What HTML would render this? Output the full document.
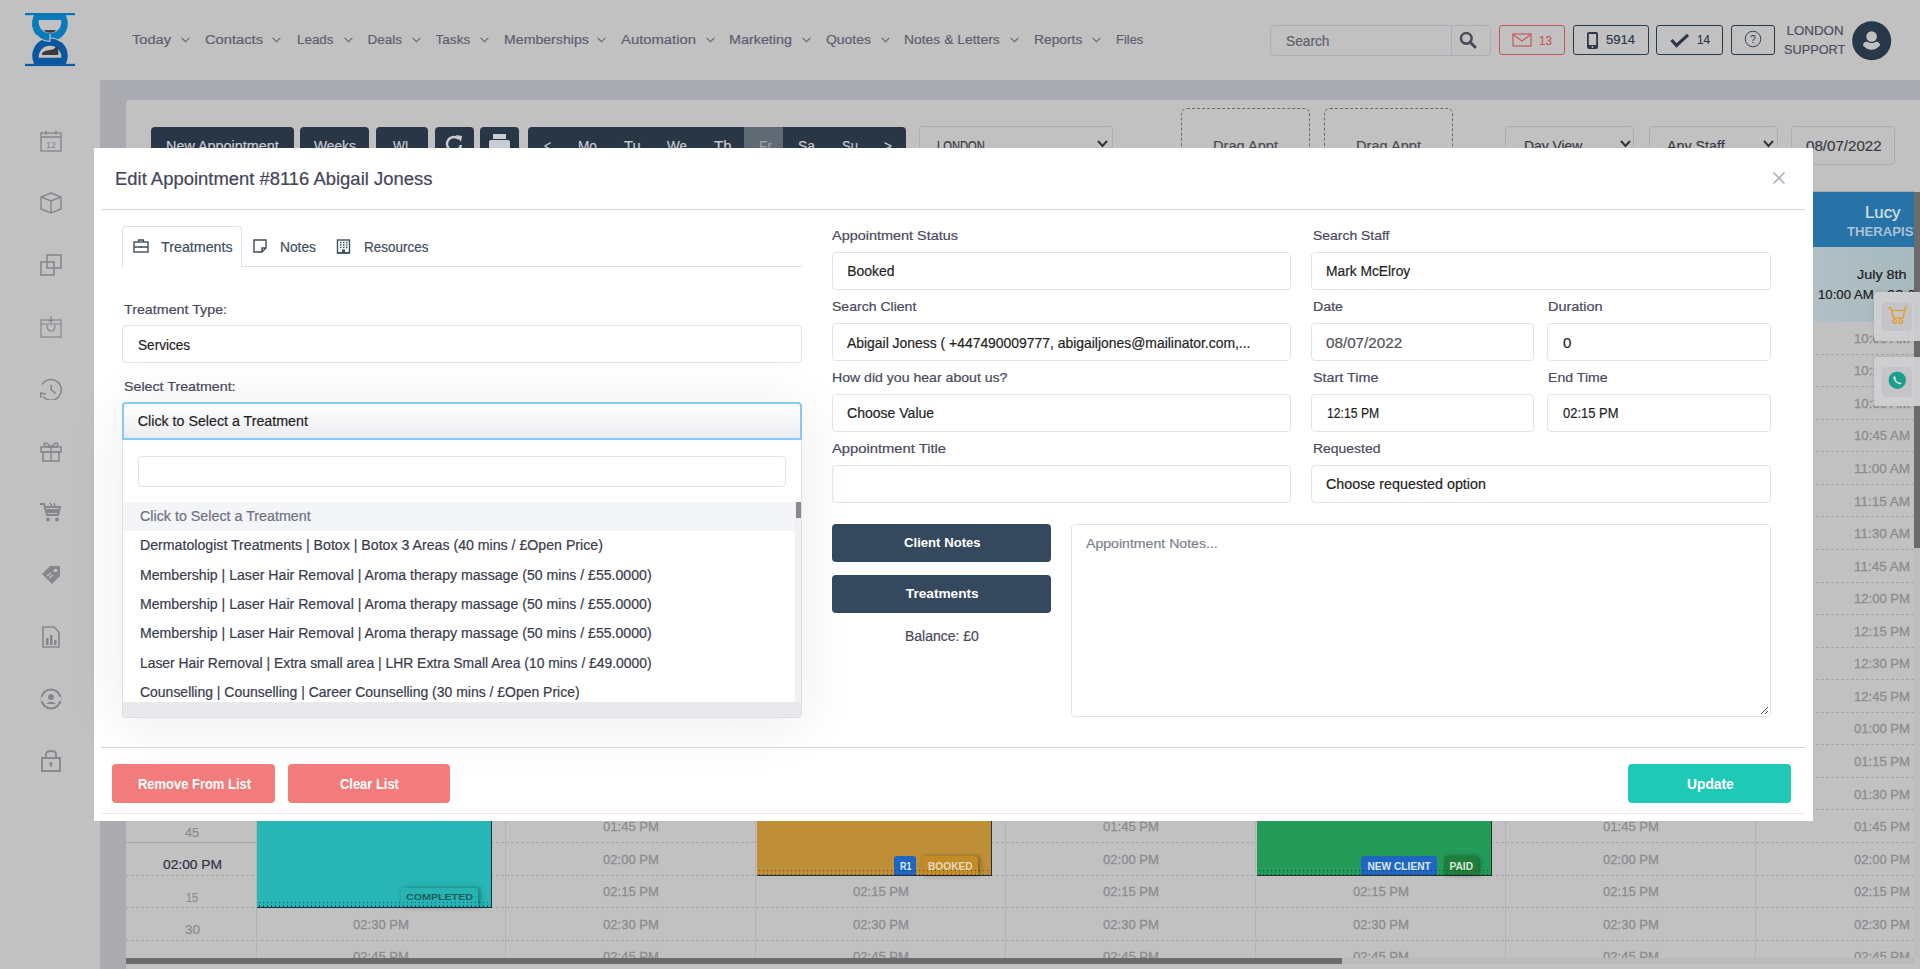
<!DOCTYPE html><html><head><meta charset="utf-8"><title>Edit Appointment</title><style>
html,body{margin:0;padding:0;}
body{width:1920px;height:969px;overflow:hidden;position:relative;background:#c1c1c1;font-family:"Liberation Sans",sans-serif;}
.t{position:absolute;white-space:nowrap;transform-origin:0 0;-webkit-text-stroke:0.2px currentColor;}
.r{position:absolute;box-sizing:border-box;}
</style></head><body>

<div class="r" style="left:100px;top:80px;width:1820px;height:889px;background:#aaabb1;"></div>
<div class="r" style="left:126px;top:100px;width:1794px;height:869px;background:#c1c1c1;border-radius:4px 0 0 0;"></div>
<svg class="r" style="left:0px;top:0px;" width="100" height="80" viewBox="0 0 100 80">
      <defs>
        <clipPath id="lc"><rect x="20" y="14" width="60" height="50"/></clipPath>
        <clipPath id="lhalf"><rect x="20" y="14" width="30" height="50"/></clipPath>
        <clipPath id="lrov"><rect x="50.5" y="30" width="30" height="12"/></clipPath>
        <clipPath id="llov"><rect x="20" y="35" width="29.5" height="12"/></clipPath>
        <clipPath id="th"><rect x="20" y="20" width="60" height="20"/></clipPath>
        <clipPath id="bh"><rect x="20" y="40" width="60" height="17.8"/></clipPath>
      </defs>
      <g clip-path="url(#lc)">
        <circle cx="50" cy="23.5" r="17.8" fill="#0a7bba"/>
        <circle cx="50" cy="55.8" r="17.8" fill="#0a56a1"/>
        <circle cx="50" cy="23.5" r="17.8" fill="#0a7bba" clip-path="url(#lhalf)"/>
        <circle cx="50" cy="23.5" r="17.8" fill="none" stroke="#c1c1c1" stroke-width="1.2" clip-path="url(#llov)"/>
        <circle cx="50" cy="55.8" r="17.8" fill="none" stroke="#c1c1c1" stroke-width="1.2" clip-path="url(#lrov)"/>
        <path d="M50 34 L50 42" stroke="#c1c1c1" stroke-width="1.2"/>
        <circle cx="50" cy="22" r="11.3" fill="#c1c1c1" clip-path="url(#th)"/>
        <circle cx="50" cy="57" r="11.3" fill="#c1c1c1" clip-path="url(#bh)"/>
      </g>
      <rect x="25" y="13" width="50" height="2.2" fill="#0a74b4"/>
      <rect x="25" y="63.8" width="50" height="2.3" fill="#0a5aa6"/>
      <path d="M43.5 30.3 Q50 29.5 56.5 30.3 Q54 32.8 50 32.8 Q46 32.8 43.5 30.3 Z" fill="#3b3b3b"/>
      <path d="M42 55 L58.3 55 L58.3 50 Q58 46.5 56 46.5 Q55 49.5 50 50 Q44 50.5 42 53 Z" fill="#3b3b3b"/>
    </svg>
<div class="t" style="left:132.00px;top:33.26px;font-size:13.52px;line-height:13.52px;color:#5f5d73;transform:scaleX(1.0806);">Today</div>
<svg class="r" style="left:181px;top:37px;" width="9" height="6" viewBox="0 0 9 6"><path d="M0.7 0.8 L4.5 4.8 L8.3 0.8" fill="none" stroke="#5f5d73" stroke-width="1.1"/></svg>
<div class="t" style="left:205.00px;top:33.26px;font-size:13.52px;line-height:13.52px;color:#5f5d73;transform:scaleX(1.0876);">Contacts</div>
<svg class="r" style="left:272px;top:37px;" width="9" height="6" viewBox="0 0 9 6"><path d="M0.7 0.8 L4.5 4.8 L8.3 0.8" fill="none" stroke="#5f5d73" stroke-width="1.1"/></svg>
<div class="t" style="left:297.00px;top:33.26px;font-size:13.52px;line-height:13.52px;color:#5f5d73;transform:scaleX(0.9909);">Leads</div>
<svg class="r" style="left:344px;top:37px;" width="9" height="6" viewBox="0 0 9 6"><path d="M0.7 0.8 L4.5 4.8 L8.3 0.8" fill="none" stroke="#5f5d73" stroke-width="1.1"/></svg>
<div class="t" style="left:367.50px;top:33.26px;font-size:13.52px;line-height:13.52px;color:#5f5d73;">Deals</div>
<svg class="r" style="left:411.7px;top:37px;" width="9" height="6" viewBox="0 0 9 6"><path d="M0.7 0.8 L4.5 4.8 L8.3 0.8" fill="none" stroke="#5f5d73" stroke-width="1.1"/></svg>
<div class="t" style="left:435.60px;top:33.26px;font-size:13.52px;line-height:13.52px;color:#5f5d73;">Tasks</div>
<svg class="r" style="left:479.5px;top:37px;" width="9" height="6" viewBox="0 0 9 6"><path d="M0.7 0.8 L4.5 4.8 L8.3 0.8" fill="none" stroke="#5f5d73" stroke-width="1.1"/></svg>
<div class="t" style="left:503.50px;top:33.26px;font-size:13.52px;line-height:13.52px;color:#5f5d73;transform:scaleX(1.0456);">Memberships</div>
<svg class="r" style="left:597px;top:37px;" width="9" height="6" viewBox="0 0 9 6"><path d="M0.7 0.8 L4.5 4.8 L8.3 0.8" fill="none" stroke="#5f5d73" stroke-width="1.1"/></svg>
<div class="t" style="left:621.00px;top:33.26px;font-size:13.52px;line-height:13.52px;color:#5f5d73;transform:scaleX(1.0965);">Automation</div>
<svg class="r" style="left:706px;top:37px;" width="9" height="6" viewBox="0 0 9 6"><path d="M0.7 0.8 L4.5 4.8 L8.3 0.8" fill="none" stroke="#5f5d73" stroke-width="1.1"/></svg>
<div class="t" style="left:729.30px;top:33.26px;font-size:13.52px;line-height:13.52px;color:#5f5d73;transform:scaleX(1.0617);">Marketing</div>
<svg class="r" style="left:802px;top:37px;" width="9" height="6" viewBox="0 0 9 6"><path d="M0.7 0.8 L4.5 4.8 L8.3 0.8" fill="none" stroke="#5f5d73" stroke-width="1.1"/></svg>
<div class="t" style="left:825.70px;top:33.26px;font-size:13.52px;line-height:13.52px;color:#5f5d73;transform:scaleX(1.0323);">Quotes</div>
<svg class="r" style="left:881px;top:37px;" width="9" height="6" viewBox="0 0 9 6"><path d="M0.7 0.8 L4.5 4.8 L8.3 0.8" fill="none" stroke="#5f5d73" stroke-width="1.1"/></svg>
<div class="t" style="left:904.30px;top:33.26px;font-size:13.52px;line-height:13.52px;color:#5f5d73;transform:scaleX(1.0275);">Notes &amp; Letters</div>
<svg class="r" style="left:1010px;top:37px;" width="9" height="6" viewBox="0 0 9 6"><path d="M0.7 0.8 L4.5 4.8 L8.3 0.8" fill="none" stroke="#5f5d73" stroke-width="1.1"/></svg>
<div class="t" style="left:1034.00px;top:33.26px;font-size:13.52px;line-height:13.52px;color:#5f5d73;transform:scaleX(1.0209);">Reports</div>
<svg class="r" style="left:1092px;top:37px;" width="9" height="6" viewBox="0 0 9 6"><path d="M0.7 0.8 L4.5 4.8 L8.3 0.8" fill="none" stroke="#5f5d73" stroke-width="1.1"/></svg>
<div class="t" style="left:1116.00px;top:33.26px;font-size:13.52px;line-height:13.52px;color:#5f5d73;transform:scaleX(0.9572);">Files</div>
<div class="r" style="left:1270px;top:24.5px;width:221px;height:31px;border:1px solid #aeaeba;border-radius:4px;"></div>
<div class="r" style="left:1451px;top:25px;width:1px;height:30px;background:#aeaeba;"></div>
<div class="t" style="left:1285.50px;top:34.27px;font-size:14.10px;line-height:14.10px;color:#5e5e6c;transform:scaleX(0.9733);">Search</div>
<svg class="r" style="left:1459px;top:31px;" width="18" height="18" viewBox="0 0 18 18"><circle cx="7.3" cy="7.3" r="5.3" fill="none" stroke="#4a4a5a" stroke-width="2.6"/><path d="M11 11 L16 16" stroke="#4a4a5a" stroke-width="3" stroke-linecap="round"/></svg>
<div class="r" style="left:1499px;top:25px;width:66px;height:30px;border:1px solid #c9575a;border-radius:3px;"></div>
<svg class="r" style="left:1512px;top:33px;" width="20" height="14" viewBox="0 0 20 14"><rect x="1" y="1" width="18" height="12" fill="none" stroke="#c9575a" stroke-width="1.2"/><path d="M1 1.5 L10 8 L19 1.5" fill="none" stroke="#c9575a" stroke-width="1.2"/></svg>
<div class="t" style="left:1538.70px;top:33.56px;font-size:13.52px;line-height:13.52px;color:#c9575a;transform:scaleX(0.8664);">13</div>
<div class="r" style="left:1573px;top:25.3px;width:76px;height:29.5px;border:1.3px solid #2b3848;border-radius:3px;"></div>
<svg class="r" style="left:1586px;top:31px;" width="13" height="19" viewBox="0 0 13 19"><rect x="1" y="1" width="11" height="17" rx="2" fill="#2b3848"/><rect x="2.8" y="3" width="7.4" height="11" fill="#c1c1c1"/><circle cx="6.5" cy="16" r="0.9" fill="#c1c1c1"/></svg>
<div class="t" style="left:1606.00px;top:33.43px;font-size:13.66px;line-height:13.66px;color:#2b3848;transform:scaleX(0.9540);">5914</div>
<div class="r" style="left:1656.4px;top:25.3px;width:66.5px;height:29.5px;border:1.3px solid #2b3848;border-radius:3px;"></div>
<svg class="r" style="left:1670px;top:33px;" width="20" height="15" viewBox="0 0 20 15"><path d="M1.5 7 L6.5 12.5 L18 1.8" fill="none" stroke="#2b3848" stroke-width="3.2"/></svg>
<div class="t" style="left:1696.50px;top:33.43px;font-size:13.66px;line-height:13.66px;color:#2b3848;transform:scaleX(0.8638);">14</div>
<div class="r" style="left:1731px;top:25.3px;width:44px;height:29.5px;border:1.3px solid #2b3848;border-radius:3px;"></div>
<svg class="r" style="left:1744px;top:30px;" width="18" height="18" viewBox="0 0 18 18"><circle cx="9" cy="9" r="7.8" fill="none" stroke="#2b3848" stroke-width="0.9"/><text x="9" y="12.6" font-size="10" text-anchor="middle" fill="#2b3848" font-family="Liberation Sans">?</text></svg>
<div class="t" style="left:1786.50px;top:24.28px;font-size:13.37px;line-height:13.37px;color:#4f4d60;">LONDON</div>
<div class="t" style="left:1783.70px;top:43.28px;font-size:13.37px;line-height:13.37px;color:#4f4d60;transform:scaleX(0.9521);">SUPPORT</div>
<svg class="r" style="left:1852px;top:20.5px;" width="40" height="40" viewBox="0 0 40 40"><circle cx="19.7" cy="19.8" r="19.5" fill="#283848"/><path d="M11 24.5 Q11 20.5 16 20.2 L23 20.2 Q28 20.5 28 24.5 Q24 28.7 19.5 28.7 Q15 28.7 11 24.5Z" fill="#c1c1c1"/><circle cx="19.6" cy="15.5" r="6.6" fill="#283848"/><circle cx="19.6" cy="15.5" r="5.3" fill="#c1c1c1"/></svg>
<svg class="r" style="left:40px;top:130px;" width="22" height="22" viewBox="0 0 22 22"><rect x="1" y="3" width="20" height="18" fill="none" stroke="#86868e" stroke-width="1.4"/><path d="M1 7 L21 7 M6 0.5 L6 5 M16 0.5 L16 5" stroke="#86868e" stroke-width="1.4"/><text x="11" y="17.5" font-size="9" text-anchor="middle" fill="#86868e" font-family="Liberation Sans">12</text></svg>
<svg class="r" style="left:40px;top:192px;" width="22" height="22" viewBox="0 0 22 22"><path d="M11 1 L21 5 L21 17 L11 21 L1 17 L1 5 Z M1 5 L11 9 L21 5 M11 9 L11 21" fill="none" stroke="#86868e" stroke-width="1.4"/></svg>
<svg class="r" style="left:40px;top:254px;" width="22" height="22" viewBox="0 0 22 22"><rect x="1" y="8" width="13" height="13" fill="none" stroke="#86868e" stroke-width="1.6"/><rect x="7" y="1" width="14" height="13" fill="none" stroke="#86868e" stroke-width="1.6"/></svg>
<svg class="r" style="left:40px;top:316px;" width="22" height="22" viewBox="0 0 22 22"><rect x="1" y="4" width="20" height="17" fill="none" stroke="#86868e" stroke-width="1.2"/><path d="M1 8 L21 8 M7 9 Q7 15 11 15 Q15 15 15 9 M11 0 L11 6 M9 4 L11 6 L13 4" fill="none" stroke="#86868e" stroke-width="1.2"/></svg>
<svg class="r" style="left:40px;top:378px;" width="22" height="22" viewBox="0 0 22 22"><path d="M2.2 6.5 A10.3 10.3 0 1 1 3.2 18.6" fill="none" stroke="#86868e" stroke-width="1.5"/><path d="M5.8 16 L0.8 15 L1 19.8" fill="none" stroke="#86868e" stroke-width="1.6"/><path d="M11.1 6.7 L11.1 11.4 L15.4 15.6" fill="none" stroke="#86868e" stroke-width="1.5"/></svg>
<svg class="r" style="left:40px;top:440px;" width="22" height="22" viewBox="0 0 22 22"><rect x="1" y="7" width="20" height="5" fill="none" stroke="#86868e" stroke-width="1.6"/><rect x="3" y="12" width="16" height="9" fill="none" stroke="#86868e" stroke-width="1.6"/><path d="M11 7 L11 21 M11 7 Q6 1 4 4 Q4 7 11 7 Q16 1 18 4 Q18 7 11 7" fill="none" stroke="#86868e" stroke-width="1.4"/></svg>
<svg class="r" style="left:40px;top:502px;" width="22" height="22" viewBox="0 0 22 22"><path d="M0 2 L4 2 L7 13 L18 13 L20 5 L5 5" fill="none" stroke="#86868e" stroke-width="2"/><path d="M6 7 L19 7 L18 11 L7 11Z" fill="#86868e"/><circle cx="8" cy="17.5" r="2" fill="#86868e"/><circle cx="17" cy="17.5" r="2" fill="#86868e"/><path d="M10 1 L12 4 M14 1 L15 4" stroke="#86868e" stroke-width="1.4"/></svg>
<svg class="r" style="left:40px;top:564px;" width="22" height="22" viewBox="0 0 22 22"><path d="M2 10 L10 2 L20 2 L20 12 L12 20 Z" fill="#86868e"/><circle cx="15.5" cy="6.5" r="1.8" fill="#c1c1c1"/><path d="M7 12 L11 9 M9 14 L13 11" stroke="#c1c1c1" stroke-width="1.4"/></svg>
<svg class="r" style="left:40px;top:626px;" width="22" height="22" viewBox="0 0 22 22"><path d="M3 1 L14 1 L19 6 L19 21 L3 21 Z" fill="none" stroke="#86868e" stroke-width="1.6"/><rect x="6" y="12" width="2.5" height="7" fill="#86868e"/><rect x="10" y="9" width="2.5" height="10" fill="#86868e"/><rect x="14" y="14" width="2.5" height="5" fill="#86868e"/></svg>
<svg class="r" style="left:40px;top:688px;" width="22" height="22" viewBox="0 0 22 22"><circle cx="11" cy="11" r="9.5" fill="none" stroke="#86868e" stroke-width="2"/><circle cx="11" cy="9" r="3" fill="#86868e"/><path d="M6 16 Q11 11 16 16 Z" fill="#86868e"/><rect x="1" y="9" width="3" height="4" fill="#c1c1c1"/><rect x="18" y="9" width="3" height="4" fill="#c1c1c1"/></svg>
<svg class="r" style="left:40px;top:750px;" width="22" height="22" viewBox="0 0 22 22"><rect x="2" y="8" width="18" height="13" fill="none" stroke="#86868e" stroke-width="1.8"/><path d="M6 8 L6 4 Q6 1 11 1 Q16 1 16 4 L16 8" fill="none" stroke="#86868e" stroke-width="1.8"/><circle cx="11" cy="13.5" r="1.6" fill="#86868e"/><path d="M11 14 L11 17" stroke="#86868e" stroke-width="1.6"/></svg>
<div class="r" style="left:151px;top:126.7px;width:143px;height:40px;background:#283646;border-radius:4px;"></div>
<div class="r" style="left:300px;top:126.7px;width:69px;height:40px;background:#283646;border-radius:4px;"></div>
<div class="r" style="left:376px;top:126.7px;width:52px;height:40px;background:#283646;border-radius:4px;"></div>
<div class="r" style="left:435px;top:126.7px;width:39px;height:40px;background:#283646;border-radius:4px;"></div>
<div class="r" style="left:480px;top:126.7px;width:39px;height:40px;background:#283646;border-radius:4px;"></div>
<div class="r" style="left:528px;top:126.7px;width:377.5px;height:40px;background:#283646;border-radius:4px;"></div>
<div class="r" style="left:744px;top:126.7px;width:39px;height:40px;background:#5f6a75;"></div>
<div class="t" style="left:166.00px;top:139.40px;font-size:14.53px;line-height:14.53px;color:#c9ccd2;transform:scaleX(0.9916);">New Appointment</div>
<div class="t" style="left:314.00px;top:139.40px;font-size:14.53px;line-height:14.53px;color:#c9ccd2;transform:scaleX(0.9505);">Weeks</div>
<div class="t" style="left:393.00px;top:139.40px;font-size:14.53px;line-height:14.53px;color:#c9ccd2;transform:scaleX(0.8715);">WL</div>
<svg class="r" style="left:444px;top:134px;" width="20" height="16" viewBox="0 0 20 16"><path d="M15 5 A7 7 0 1 0 17 11" fill="none" stroke="#c9ccd2" stroke-width="2.4"/><path d="M12 1 L18 2 L17 8 Z" fill="#c9ccd2"/></svg>
<svg class="r" style="left:489px;top:134px;" width="21" height="16" viewBox="0 0 21 16"><rect x="4" y="0" width="13" height="5" fill="#c9ccd2"/><rect x="0" y="6" width="21" height="10" rx="2" fill="#c9ccd2"/></svg>
<div class="t" style="left:544.00px;top:139.40px;font-size:14.53px;line-height:14.53px;color:#c9ccd2;transform:scaleX(0.8232);">&lt;</div>
<div class="t" style="left:578.00px;top:139.40px;font-size:14.53px;line-height:14.53px;color:#c9ccd2;transform:scaleX(0.9404);">Mo</div>
<div class="t" style="left:624.00px;top:139.40px;font-size:14.53px;line-height:14.53px;color:#c9ccd2;transform:scaleX(1.0107);">Tu</div>
<div class="t" style="left:667.00px;top:139.40px;font-size:14.53px;line-height:14.53px;color:#c9ccd2;transform:scaleX(0.9297);">We</div>
<div class="t" style="left:714.00px;top:139.40px;font-size:14.53px;line-height:14.53px;color:#c9ccd2;transform:scaleX(1.0453);">Th</div>
<div class="t" style="left:759.00px;top:139.40px;font-size:14.53px;line-height:14.53px;color:#9aa1a8;transform:scaleX(0.9465);">Fr</div>
<div class="t" style="left:798.00px;top:139.40px;font-size:14.53px;line-height:14.53px;color:#c9ccd2;transform:scaleX(0.9548);">Sa</div>
<div class="t" style="left:841.60px;top:139.40px;font-size:14.53px;line-height:14.53px;color:#c9ccd2;transform:scaleX(0.8986);">Su</div>
<div class="t" style="left:884.00px;top:139.40px;font-size:14.53px;line-height:14.53px;color:#c9ccd2;transform:scaleX(0.9409);">&gt;</div>
<div class="r" style="left:919px;top:126px;width:194px;height:40px;border:1px solid #adadb3;border-radius:4px;"></div>
<div class="t" style="left:937.00px;top:139.40px;font-size:14.53px;line-height:14.53px;color:#3a3a44;transform:scaleX(0.7716);">LONDON</div>
<svg class="r" style="left:1097px;top:140px;" width="11" height="8" viewBox="0 0 11 8"><path d="M1 1 L5.5 6 L10 1" fill="none" stroke="#333" stroke-width="2"/></svg>
<div class="r" style="left:1180.5px;top:107.5px;width:129px;height:70px;border:1px dashed #6a6a70;border-radius:6px;"></div>
<div class="t" style="left:1212.50px;top:139.40px;font-size:14.53px;line-height:14.53px;color:#4a4a54;transform:scaleX(1.0061);">Drag Appt</div>
<div class="r" style="left:1323.5px;top:107.5px;width:129px;height:70px;border:1px dashed #6a6a70;border-radius:6px;"></div>
<div class="t" style="left:1355.50px;top:139.40px;font-size:14.53px;line-height:14.53px;color:#4a4a54;transform:scaleX(1.0061);">Drag Appt</div>
<div class="r" style="left:1505px;top:126px;width:129px;height:40px;border:1px solid #adadb3;border-radius:4px;"></div>
<div class="t" style="left:1523.50px;top:139.40px;font-size:14.53px;line-height:14.53px;color:#3a3a44;transform:scaleX(0.9560);">Day View</div>
<svg class="r" style="left:1620px;top:140px;" width="11" height="8" viewBox="0 0 11 8"><path d="M1 1 L5.5 6 L10 1" fill="none" stroke="#333" stroke-width="2"/></svg>
<div class="r" style="left:1648.5px;top:126px;width:129px;height:40px;border:1px solid #adadb3;border-radius:4px;"></div>
<div class="t" style="left:1667.00px;top:139.40px;font-size:14.53px;line-height:14.53px;color:#3a3a44;transform:scaleX(0.9826);">Any Staff</div>
<svg class="r" style="left:1763px;top:140px;" width="11" height="8" viewBox="0 0 11 8"><path d="M1 1 L5.5 6 L10 1" fill="none" stroke="#333" stroke-width="2"/></svg>
<div class="r" style="left:1791px;top:126px;width:104px;height:39px;border:1px solid #adadb3;border-radius:4px;"></div>
<div class="t" style="left:1806.00px;top:139.40px;font-size:14.53px;line-height:14.53px;color:#3a3a44;transform:scaleX(1.0406);">08/07/2022</div>
<div class="r" style="left:126px;top:191px;width:1788px;height:1px;background:#a9a9b0;"></div>
<div class="r" style="left:1813px;top:192.4px;width:101px;height:55px;background:#2772a6;"></div>
<div class="t" style="left:1864.50px;top:204.42px;font-size:16.28px;line-height:16.28px;color:#d8e2ea;transform:scaleX(1.0335);">Lucy</div>
<div class="t" style="left:1846.50px;top:225.13px;font-size:13.08px;line-height:13.08px;color:#a9c3d6;font-weight:700;-webkit-text-stroke:0;transform:scaleX(1.0053);">THERAPIST</div>
<div class="r" style="left:1813px;top:247px;width:101px;height:74.5px;background:linear-gradient(90deg,#b0c0c5,#a8babe);"></div>
<div class="t" style="left:1856.80px;top:268.57px;font-size:12.79px;line-height:12.79px;color:#1e2024;transform:scaleX(1.1256);">July 8th</div>
<div class="t" style="left:1817.60px;top:287.88px;font-size:13.37px;line-height:13.37px;color:#1e2024;transform:scaleX(0.9859);">10:00 AM</div>
<div class="t" style="left:1878.00px;top:287.88px;font-size:13.37px;line-height:13.37px;color:#1e2024;transform:scaleX(1.1011);">- 02:00 PM</div>
<div class="r" style="left:126px;top:354px;width:1788px;height:1px;background-image:linear-gradient(90deg,#a6a6aa 60%,transparent 60%);background-size:5px 1px;"></div>
<div class="t" style="left:353.00px;top:331.83px;font-size:13.08px;line-height:13.08px;color:#8c8c90;transform:scaleX(1.0132);-webkit-text-stroke:0.3px #8c8c90;">10:00 AM</div>
<div class="t" style="left:603.00px;top:331.83px;font-size:13.08px;line-height:13.08px;color:#8c8c90;transform:scaleX(1.0132);-webkit-text-stroke:0.3px #8c8c90;">10:00 AM</div>
<div class="t" style="left:853.00px;top:331.83px;font-size:13.08px;line-height:13.08px;color:#8c8c90;transform:scaleX(1.0132);-webkit-text-stroke:0.3px #8c8c90;">10:00 AM</div>
<div class="t" style="left:1103.00px;top:331.83px;font-size:13.08px;line-height:13.08px;color:#8c8c90;transform:scaleX(1.0132);-webkit-text-stroke:0.3px #8c8c90;">10:00 AM</div>
<div class="t" style="left:1353.00px;top:331.83px;font-size:13.08px;line-height:13.08px;color:#8c8c90;transform:scaleX(1.0132);-webkit-text-stroke:0.3px #8c8c90;">10:00 AM</div>
<div class="t" style="left:1603.00px;top:331.83px;font-size:13.08px;line-height:13.08px;color:#8c8c90;transform:scaleX(1.0132);-webkit-text-stroke:0.3px #8c8c90;">10:00 AM</div>
<div class="t" style="left:1854.00px;top:331.83px;font-size:13.08px;line-height:13.08px;color:#8c8c90;transform:scaleX(1.0132);-webkit-text-stroke:0.3px #8c8c90;">10:00 AM</div>
<div class="r" style="left:126px;top:386px;width:1788px;height:1px;background-image:linear-gradient(90deg,#a6a6aa 60%,transparent 60%);background-size:5px 1px;"></div>
<div class="t" style="left:353.00px;top:364.38px;font-size:13.08px;line-height:13.08px;color:#8c8c90;transform:scaleX(1.0132);-webkit-text-stroke:0.3px #8c8c90;">10:15 AM</div>
<div class="t" style="left:603.00px;top:364.38px;font-size:13.08px;line-height:13.08px;color:#8c8c90;transform:scaleX(1.0132);-webkit-text-stroke:0.3px #8c8c90;">10:15 AM</div>
<div class="t" style="left:853.00px;top:364.38px;font-size:13.08px;line-height:13.08px;color:#8c8c90;transform:scaleX(1.0132);-webkit-text-stroke:0.3px #8c8c90;">10:15 AM</div>
<div class="t" style="left:1103.00px;top:364.38px;font-size:13.08px;line-height:13.08px;color:#8c8c90;transform:scaleX(1.0132);-webkit-text-stroke:0.3px #8c8c90;">10:15 AM</div>
<div class="t" style="left:1353.00px;top:364.38px;font-size:13.08px;line-height:13.08px;color:#8c8c90;transform:scaleX(1.0132);-webkit-text-stroke:0.3px #8c8c90;">10:15 AM</div>
<div class="t" style="left:1603.00px;top:364.38px;font-size:13.08px;line-height:13.08px;color:#8c8c90;transform:scaleX(1.0132);-webkit-text-stroke:0.3px #8c8c90;">10:15 AM</div>
<div class="t" style="left:1854.00px;top:364.38px;font-size:13.08px;line-height:13.08px;color:#8c8c90;transform:scaleX(1.0132);-webkit-text-stroke:0.3px #8c8c90;">10:15 AM</div>
<div class="r" style="left:126px;top:419px;width:1788px;height:1px;background-image:linear-gradient(90deg,#a6a6aa 60%,transparent 60%);background-size:5px 1px;"></div>
<div class="t" style="left:353.00px;top:396.93px;font-size:13.08px;line-height:13.08px;color:#8c8c90;transform:scaleX(1.0132);-webkit-text-stroke:0.3px #8c8c90;">10:30 AM</div>
<div class="t" style="left:603.00px;top:396.93px;font-size:13.08px;line-height:13.08px;color:#8c8c90;transform:scaleX(1.0132);-webkit-text-stroke:0.3px #8c8c90;">10:30 AM</div>
<div class="t" style="left:853.00px;top:396.93px;font-size:13.08px;line-height:13.08px;color:#8c8c90;transform:scaleX(1.0132);-webkit-text-stroke:0.3px #8c8c90;">10:30 AM</div>
<div class="t" style="left:1103.00px;top:396.93px;font-size:13.08px;line-height:13.08px;color:#8c8c90;transform:scaleX(1.0132);-webkit-text-stroke:0.3px #8c8c90;">10:30 AM</div>
<div class="t" style="left:1353.00px;top:396.93px;font-size:13.08px;line-height:13.08px;color:#8c8c90;transform:scaleX(1.0132);-webkit-text-stroke:0.3px #8c8c90;">10:30 AM</div>
<div class="t" style="left:1603.00px;top:396.93px;font-size:13.08px;line-height:13.08px;color:#8c8c90;transform:scaleX(1.0132);-webkit-text-stroke:0.3px #8c8c90;">10:30 AM</div>
<div class="t" style="left:1854.00px;top:396.93px;font-size:13.08px;line-height:13.08px;color:#8c8c90;transform:scaleX(1.0132);-webkit-text-stroke:0.3px #8c8c90;">10:30 AM</div>
<div class="r" style="left:126px;top:451px;width:1788px;height:1px;background-image:linear-gradient(90deg,#a6a6aa 60%,transparent 60%);background-size:5px 1px;"></div>
<div class="t" style="left:353.00px;top:429.48px;font-size:13.08px;line-height:13.08px;color:#8c8c90;transform:scaleX(1.0132);-webkit-text-stroke:0.3px #8c8c90;">10:45 AM</div>
<div class="t" style="left:603.00px;top:429.48px;font-size:13.08px;line-height:13.08px;color:#8c8c90;transform:scaleX(1.0132);-webkit-text-stroke:0.3px #8c8c90;">10:45 AM</div>
<div class="t" style="left:853.00px;top:429.48px;font-size:13.08px;line-height:13.08px;color:#8c8c90;transform:scaleX(1.0132);-webkit-text-stroke:0.3px #8c8c90;">10:45 AM</div>
<div class="t" style="left:1103.00px;top:429.48px;font-size:13.08px;line-height:13.08px;color:#8c8c90;transform:scaleX(1.0132);-webkit-text-stroke:0.3px #8c8c90;">10:45 AM</div>
<div class="t" style="left:1353.00px;top:429.48px;font-size:13.08px;line-height:13.08px;color:#8c8c90;transform:scaleX(1.0132);-webkit-text-stroke:0.3px #8c8c90;">10:45 AM</div>
<div class="t" style="left:1603.00px;top:429.48px;font-size:13.08px;line-height:13.08px;color:#8c8c90;transform:scaleX(1.0132);-webkit-text-stroke:0.3px #8c8c90;">10:45 AM</div>
<div class="t" style="left:1854.00px;top:429.48px;font-size:13.08px;line-height:13.08px;color:#8c8c90;transform:scaleX(1.0132);-webkit-text-stroke:0.3px #8c8c90;">10:45 AM</div>
<div class="r" style="left:126px;top:484px;width:1788px;height:1px;background-image:linear-gradient(90deg,#a6a6aa 60%,transparent 60%);background-size:5px 1px;"></div>
<div class="t" style="left:353.00px;top:462.03px;font-size:13.08px;line-height:13.08px;color:#8c8c90;transform:scaleX(1.0315);-webkit-text-stroke:0.3px #8c8c90;">11:00 AM</div>
<div class="t" style="left:603.00px;top:462.03px;font-size:13.08px;line-height:13.08px;color:#8c8c90;transform:scaleX(1.0315);-webkit-text-stroke:0.3px #8c8c90;">11:00 AM</div>
<div class="t" style="left:853.00px;top:462.03px;font-size:13.08px;line-height:13.08px;color:#8c8c90;transform:scaleX(1.0315);-webkit-text-stroke:0.3px #8c8c90;">11:00 AM</div>
<div class="t" style="left:1103.00px;top:462.03px;font-size:13.08px;line-height:13.08px;color:#8c8c90;transform:scaleX(1.0315);-webkit-text-stroke:0.3px #8c8c90;">11:00 AM</div>
<div class="t" style="left:1353.00px;top:462.03px;font-size:13.08px;line-height:13.08px;color:#8c8c90;transform:scaleX(1.0315);-webkit-text-stroke:0.3px #8c8c90;">11:00 AM</div>
<div class="t" style="left:1603.00px;top:462.03px;font-size:13.08px;line-height:13.08px;color:#8c8c90;transform:scaleX(1.0315);-webkit-text-stroke:0.3px #8c8c90;">11:00 AM</div>
<div class="t" style="left:1854.00px;top:462.03px;font-size:13.08px;line-height:13.08px;color:#8c8c90;transform:scaleX(1.0315);-webkit-text-stroke:0.3px #8c8c90;">11:00 AM</div>
<div class="r" style="left:126px;top:516px;width:1788px;height:1px;background-image:linear-gradient(90deg,#a6a6aa 60%,transparent 60%);background-size:5px 1px;"></div>
<div class="t" style="left:353.00px;top:494.58px;font-size:13.08px;line-height:13.08px;color:#8c8c90;transform:scaleX(1.0315);-webkit-text-stroke:0.3px #8c8c90;">11:15 AM</div>
<div class="t" style="left:603.00px;top:494.58px;font-size:13.08px;line-height:13.08px;color:#8c8c90;transform:scaleX(1.0315);-webkit-text-stroke:0.3px #8c8c90;">11:15 AM</div>
<div class="t" style="left:853.00px;top:494.58px;font-size:13.08px;line-height:13.08px;color:#8c8c90;transform:scaleX(1.0315);-webkit-text-stroke:0.3px #8c8c90;">11:15 AM</div>
<div class="t" style="left:1103.00px;top:494.58px;font-size:13.08px;line-height:13.08px;color:#8c8c90;transform:scaleX(1.0315);-webkit-text-stroke:0.3px #8c8c90;">11:15 AM</div>
<div class="t" style="left:1353.00px;top:494.58px;font-size:13.08px;line-height:13.08px;color:#8c8c90;transform:scaleX(1.0315);-webkit-text-stroke:0.3px #8c8c90;">11:15 AM</div>
<div class="t" style="left:1603.00px;top:494.58px;font-size:13.08px;line-height:13.08px;color:#8c8c90;transform:scaleX(1.0315);-webkit-text-stroke:0.3px #8c8c90;">11:15 AM</div>
<div class="t" style="left:1854.00px;top:494.58px;font-size:13.08px;line-height:13.08px;color:#8c8c90;transform:scaleX(1.0315);-webkit-text-stroke:0.3px #8c8c90;">11:15 AM</div>
<div class="r" style="left:126px;top:549px;width:1788px;height:1px;background-image:linear-gradient(90deg,#a6a6aa 60%,transparent 60%);background-size:5px 1px;"></div>
<div class="t" style="left:353.00px;top:527.13px;font-size:13.08px;line-height:13.08px;color:#8c8c90;transform:scaleX(1.0315);-webkit-text-stroke:0.3px #8c8c90;">11:30 AM</div>
<div class="t" style="left:603.00px;top:527.13px;font-size:13.08px;line-height:13.08px;color:#8c8c90;transform:scaleX(1.0315);-webkit-text-stroke:0.3px #8c8c90;">11:30 AM</div>
<div class="t" style="left:853.00px;top:527.13px;font-size:13.08px;line-height:13.08px;color:#8c8c90;transform:scaleX(1.0315);-webkit-text-stroke:0.3px #8c8c90;">11:30 AM</div>
<div class="t" style="left:1103.00px;top:527.13px;font-size:13.08px;line-height:13.08px;color:#8c8c90;transform:scaleX(1.0315);-webkit-text-stroke:0.3px #8c8c90;">11:30 AM</div>
<div class="t" style="left:1353.00px;top:527.13px;font-size:13.08px;line-height:13.08px;color:#8c8c90;transform:scaleX(1.0315);-webkit-text-stroke:0.3px #8c8c90;">11:30 AM</div>
<div class="t" style="left:1603.00px;top:527.13px;font-size:13.08px;line-height:13.08px;color:#8c8c90;transform:scaleX(1.0315);-webkit-text-stroke:0.3px #8c8c90;">11:30 AM</div>
<div class="t" style="left:1854.00px;top:527.13px;font-size:13.08px;line-height:13.08px;color:#8c8c90;transform:scaleX(1.0315);-webkit-text-stroke:0.3px #8c8c90;">11:30 AM</div>
<div class="r" style="left:126px;top:582px;width:1788px;height:1px;background-image:linear-gradient(90deg,#a6a6aa 60%,transparent 60%);background-size:5px 1px;"></div>
<div class="t" style="left:353.00px;top:559.68px;font-size:13.08px;line-height:13.08px;color:#8c8c90;transform:scaleX(1.0315);-webkit-text-stroke:0.3px #8c8c90;">11:45 AM</div>
<div class="t" style="left:603.00px;top:559.68px;font-size:13.08px;line-height:13.08px;color:#8c8c90;transform:scaleX(1.0315);-webkit-text-stroke:0.3px #8c8c90;">11:45 AM</div>
<div class="t" style="left:853.00px;top:559.68px;font-size:13.08px;line-height:13.08px;color:#8c8c90;transform:scaleX(1.0315);-webkit-text-stroke:0.3px #8c8c90;">11:45 AM</div>
<div class="t" style="left:1103.00px;top:559.68px;font-size:13.08px;line-height:13.08px;color:#8c8c90;transform:scaleX(1.0315);-webkit-text-stroke:0.3px #8c8c90;">11:45 AM</div>
<div class="t" style="left:1353.00px;top:559.68px;font-size:13.08px;line-height:13.08px;color:#8c8c90;transform:scaleX(1.0315);-webkit-text-stroke:0.3px #8c8c90;">11:45 AM</div>
<div class="t" style="left:1603.00px;top:559.68px;font-size:13.08px;line-height:13.08px;color:#8c8c90;transform:scaleX(1.0315);-webkit-text-stroke:0.3px #8c8c90;">11:45 AM</div>
<div class="t" style="left:1854.00px;top:559.68px;font-size:13.08px;line-height:13.08px;color:#8c8c90;transform:scaleX(1.0315);-webkit-text-stroke:0.3px #8c8c90;">11:45 AM</div>
<div class="r" style="left:126px;top:614px;width:1788px;height:1px;background-image:linear-gradient(90deg,#a6a6aa 60%,transparent 60%);background-size:5px 1px;"></div>
<div class="t" style="left:353.00px;top:592.23px;font-size:13.08px;line-height:13.08px;color:#8c8c90;-webkit-text-stroke:0.3px #8c8c90;">12:00 PM</div>
<div class="t" style="left:603.00px;top:592.23px;font-size:13.08px;line-height:13.08px;color:#8c8c90;-webkit-text-stroke:0.3px #8c8c90;">12:00 PM</div>
<div class="t" style="left:853.00px;top:592.23px;font-size:13.08px;line-height:13.08px;color:#8c8c90;-webkit-text-stroke:0.3px #8c8c90;">12:00 PM</div>
<div class="t" style="left:1103.00px;top:592.23px;font-size:13.08px;line-height:13.08px;color:#8c8c90;-webkit-text-stroke:0.3px #8c8c90;">12:00 PM</div>
<div class="t" style="left:1353.00px;top:592.23px;font-size:13.08px;line-height:13.08px;color:#8c8c90;-webkit-text-stroke:0.3px #8c8c90;">12:00 PM</div>
<div class="t" style="left:1603.00px;top:592.23px;font-size:13.08px;line-height:13.08px;color:#8c8c90;-webkit-text-stroke:0.3px #8c8c90;">12:00 PM</div>
<div class="t" style="left:1854.00px;top:592.23px;font-size:13.08px;line-height:13.08px;color:#8c8c90;-webkit-text-stroke:0.3px #8c8c90;">12:00 PM</div>
<div class="r" style="left:126px;top:647px;width:1788px;height:1px;background-image:linear-gradient(90deg,#a6a6aa 60%,transparent 60%);background-size:5px 1px;"></div>
<div class="t" style="left:353.00px;top:624.78px;font-size:13.08px;line-height:13.08px;color:#8c8c90;-webkit-text-stroke:0.3px #8c8c90;">12:15 PM</div>
<div class="t" style="left:603.00px;top:624.78px;font-size:13.08px;line-height:13.08px;color:#8c8c90;-webkit-text-stroke:0.3px #8c8c90;">12:15 PM</div>
<div class="t" style="left:853.00px;top:624.78px;font-size:13.08px;line-height:13.08px;color:#8c8c90;-webkit-text-stroke:0.3px #8c8c90;">12:15 PM</div>
<div class="t" style="left:1103.00px;top:624.78px;font-size:13.08px;line-height:13.08px;color:#8c8c90;-webkit-text-stroke:0.3px #8c8c90;">12:15 PM</div>
<div class="t" style="left:1353.00px;top:624.78px;font-size:13.08px;line-height:13.08px;color:#8c8c90;-webkit-text-stroke:0.3px #8c8c90;">12:15 PM</div>
<div class="t" style="left:1603.00px;top:624.78px;font-size:13.08px;line-height:13.08px;color:#8c8c90;-webkit-text-stroke:0.3px #8c8c90;">12:15 PM</div>
<div class="t" style="left:1854.00px;top:624.78px;font-size:13.08px;line-height:13.08px;color:#8c8c90;-webkit-text-stroke:0.3px #8c8c90;">12:15 PM</div>
<div class="r" style="left:126px;top:679px;width:1788px;height:1px;background-image:linear-gradient(90deg,#a6a6aa 60%,transparent 60%);background-size:5px 1px;"></div>
<div class="t" style="left:353.00px;top:657.33px;font-size:13.08px;line-height:13.08px;color:#8c8c90;-webkit-text-stroke:0.3px #8c8c90;">12:30 PM</div>
<div class="t" style="left:603.00px;top:657.33px;font-size:13.08px;line-height:13.08px;color:#8c8c90;-webkit-text-stroke:0.3px #8c8c90;">12:30 PM</div>
<div class="t" style="left:853.00px;top:657.33px;font-size:13.08px;line-height:13.08px;color:#8c8c90;-webkit-text-stroke:0.3px #8c8c90;">12:30 PM</div>
<div class="t" style="left:1103.00px;top:657.33px;font-size:13.08px;line-height:13.08px;color:#8c8c90;-webkit-text-stroke:0.3px #8c8c90;">12:30 PM</div>
<div class="t" style="left:1353.00px;top:657.33px;font-size:13.08px;line-height:13.08px;color:#8c8c90;-webkit-text-stroke:0.3px #8c8c90;">12:30 PM</div>
<div class="t" style="left:1603.00px;top:657.33px;font-size:13.08px;line-height:13.08px;color:#8c8c90;-webkit-text-stroke:0.3px #8c8c90;">12:30 PM</div>
<div class="t" style="left:1854.00px;top:657.33px;font-size:13.08px;line-height:13.08px;color:#8c8c90;-webkit-text-stroke:0.3px #8c8c90;">12:30 PM</div>
<div class="r" style="left:126px;top:712px;width:1788px;height:1px;background-image:linear-gradient(90deg,#a6a6aa 60%,transparent 60%);background-size:5px 1px;"></div>
<div class="t" style="left:353.00px;top:689.88px;font-size:13.08px;line-height:13.08px;color:#8c8c90;-webkit-text-stroke:0.3px #8c8c90;">12:45 PM</div>
<div class="t" style="left:603.00px;top:689.88px;font-size:13.08px;line-height:13.08px;color:#8c8c90;-webkit-text-stroke:0.3px #8c8c90;">12:45 PM</div>
<div class="t" style="left:853.00px;top:689.88px;font-size:13.08px;line-height:13.08px;color:#8c8c90;-webkit-text-stroke:0.3px #8c8c90;">12:45 PM</div>
<div class="t" style="left:1103.00px;top:689.88px;font-size:13.08px;line-height:13.08px;color:#8c8c90;-webkit-text-stroke:0.3px #8c8c90;">12:45 PM</div>
<div class="t" style="left:1353.00px;top:689.88px;font-size:13.08px;line-height:13.08px;color:#8c8c90;-webkit-text-stroke:0.3px #8c8c90;">12:45 PM</div>
<div class="t" style="left:1603.00px;top:689.88px;font-size:13.08px;line-height:13.08px;color:#8c8c90;-webkit-text-stroke:0.3px #8c8c90;">12:45 PM</div>
<div class="t" style="left:1854.00px;top:689.88px;font-size:13.08px;line-height:13.08px;color:#8c8c90;-webkit-text-stroke:0.3px #8c8c90;">12:45 PM</div>
<div class="r" style="left:126px;top:744px;width:1788px;height:1px;background-image:linear-gradient(90deg,#a6a6aa 60%,transparent 60%);background-size:5px 1px;"></div>
<div class="t" style="left:353.00px;top:722.43px;font-size:13.08px;line-height:13.08px;color:#8c8c90;-webkit-text-stroke:0.3px #8c8c90;">01:00 PM</div>
<div class="t" style="left:603.00px;top:722.43px;font-size:13.08px;line-height:13.08px;color:#8c8c90;-webkit-text-stroke:0.3px #8c8c90;">01:00 PM</div>
<div class="t" style="left:853.00px;top:722.43px;font-size:13.08px;line-height:13.08px;color:#8c8c90;-webkit-text-stroke:0.3px #8c8c90;">01:00 PM</div>
<div class="t" style="left:1103.00px;top:722.43px;font-size:13.08px;line-height:13.08px;color:#8c8c90;-webkit-text-stroke:0.3px #8c8c90;">01:00 PM</div>
<div class="t" style="left:1353.00px;top:722.43px;font-size:13.08px;line-height:13.08px;color:#8c8c90;-webkit-text-stroke:0.3px #8c8c90;">01:00 PM</div>
<div class="t" style="left:1603.00px;top:722.43px;font-size:13.08px;line-height:13.08px;color:#8c8c90;-webkit-text-stroke:0.3px #8c8c90;">01:00 PM</div>
<div class="t" style="left:1854.00px;top:722.43px;font-size:13.08px;line-height:13.08px;color:#8c8c90;-webkit-text-stroke:0.3px #8c8c90;">01:00 PM</div>
<div class="r" style="left:126px;top:777px;width:1788px;height:1px;background-image:linear-gradient(90deg,#a6a6aa 60%,transparent 60%);background-size:5px 1px;"></div>
<div class="t" style="left:353.00px;top:754.98px;font-size:13.08px;line-height:13.08px;color:#8c8c90;-webkit-text-stroke:0.3px #8c8c90;">01:15 PM</div>
<div class="t" style="left:603.00px;top:754.98px;font-size:13.08px;line-height:13.08px;color:#8c8c90;-webkit-text-stroke:0.3px #8c8c90;">01:15 PM</div>
<div class="t" style="left:853.00px;top:754.98px;font-size:13.08px;line-height:13.08px;color:#8c8c90;-webkit-text-stroke:0.3px #8c8c90;">01:15 PM</div>
<div class="t" style="left:1103.00px;top:754.98px;font-size:13.08px;line-height:13.08px;color:#8c8c90;-webkit-text-stroke:0.3px #8c8c90;">01:15 PM</div>
<div class="t" style="left:1353.00px;top:754.98px;font-size:13.08px;line-height:13.08px;color:#8c8c90;-webkit-text-stroke:0.3px #8c8c90;">01:15 PM</div>
<div class="t" style="left:1603.00px;top:754.98px;font-size:13.08px;line-height:13.08px;color:#8c8c90;-webkit-text-stroke:0.3px #8c8c90;">01:15 PM</div>
<div class="t" style="left:1854.00px;top:754.98px;font-size:13.08px;line-height:13.08px;color:#8c8c90;-webkit-text-stroke:0.3px #8c8c90;">01:15 PM</div>
<div class="r" style="left:126px;top:809px;width:1788px;height:1px;background-image:linear-gradient(90deg,#a6a6aa 60%,transparent 60%);background-size:5px 1px;"></div>
<div class="t" style="left:353.00px;top:787.53px;font-size:13.08px;line-height:13.08px;color:#8c8c90;-webkit-text-stroke:0.3px #8c8c90;">01:30 PM</div>
<div class="t" style="left:603.00px;top:787.53px;font-size:13.08px;line-height:13.08px;color:#8c8c90;-webkit-text-stroke:0.3px #8c8c90;">01:30 PM</div>
<div class="t" style="left:853.00px;top:787.53px;font-size:13.08px;line-height:13.08px;color:#8c8c90;-webkit-text-stroke:0.3px #8c8c90;">01:30 PM</div>
<div class="t" style="left:1103.00px;top:787.53px;font-size:13.08px;line-height:13.08px;color:#8c8c90;-webkit-text-stroke:0.3px #8c8c90;">01:30 PM</div>
<div class="t" style="left:1353.00px;top:787.53px;font-size:13.08px;line-height:13.08px;color:#8c8c90;-webkit-text-stroke:0.3px #8c8c90;">01:30 PM</div>
<div class="t" style="left:1603.00px;top:787.53px;font-size:13.08px;line-height:13.08px;color:#8c8c90;-webkit-text-stroke:0.3px #8c8c90;">01:30 PM</div>
<div class="t" style="left:1854.00px;top:787.53px;font-size:13.08px;line-height:13.08px;color:#8c8c90;-webkit-text-stroke:0.3px #8c8c90;">01:30 PM</div>
<div class="r" style="left:126px;top:842px;width:1788px;height:1px;background-image:linear-gradient(90deg,#a6a6aa 60%,transparent 60%);background-size:5px 1px;"></div>
<div class="t" style="left:353.00px;top:820.08px;font-size:13.08px;line-height:13.08px;color:#8c8c90;-webkit-text-stroke:0.3px #8c8c90;">01:45 PM</div>
<div class="t" style="left:603.00px;top:820.08px;font-size:13.08px;line-height:13.08px;color:#8c8c90;-webkit-text-stroke:0.3px #8c8c90;">01:45 PM</div>
<div class="t" style="left:853.00px;top:820.08px;font-size:13.08px;line-height:13.08px;color:#8c8c90;-webkit-text-stroke:0.3px #8c8c90;">01:45 PM</div>
<div class="t" style="left:1103.00px;top:820.08px;font-size:13.08px;line-height:13.08px;color:#8c8c90;-webkit-text-stroke:0.3px #8c8c90;">01:45 PM</div>
<div class="t" style="left:1353.00px;top:820.08px;font-size:13.08px;line-height:13.08px;color:#8c8c90;-webkit-text-stroke:0.3px #8c8c90;">01:45 PM</div>
<div class="t" style="left:1603.00px;top:820.08px;font-size:13.08px;line-height:13.08px;color:#8c8c90;-webkit-text-stroke:0.3px #8c8c90;">01:45 PM</div>
<div class="t" style="left:1854.00px;top:820.08px;font-size:13.08px;line-height:13.08px;color:#8c8c90;-webkit-text-stroke:0.3px #8c8c90;">01:45 PM</div>
<div class="r" style="left:126px;top:875px;width:1788px;height:1px;background-image:linear-gradient(90deg,#a6a6aa 60%,transparent 60%);background-size:5px 1px;"></div>
<div class="t" style="left:353.00px;top:852.63px;font-size:13.08px;line-height:13.08px;color:#8c8c90;-webkit-text-stroke:0.3px #8c8c90;">02:00 PM</div>
<div class="t" style="left:603.00px;top:852.63px;font-size:13.08px;line-height:13.08px;color:#8c8c90;-webkit-text-stroke:0.3px #8c8c90;">02:00 PM</div>
<div class="t" style="left:853.00px;top:852.63px;font-size:13.08px;line-height:13.08px;color:#8c8c90;-webkit-text-stroke:0.3px #8c8c90;">02:00 PM</div>
<div class="t" style="left:1103.00px;top:852.63px;font-size:13.08px;line-height:13.08px;color:#8c8c90;-webkit-text-stroke:0.3px #8c8c90;">02:00 PM</div>
<div class="t" style="left:1353.00px;top:852.63px;font-size:13.08px;line-height:13.08px;color:#8c8c90;-webkit-text-stroke:0.3px #8c8c90;">02:00 PM</div>
<div class="t" style="left:1603.00px;top:852.63px;font-size:13.08px;line-height:13.08px;color:#8c8c90;-webkit-text-stroke:0.3px #8c8c90;">02:00 PM</div>
<div class="t" style="left:1854.00px;top:852.63px;font-size:13.08px;line-height:13.08px;color:#8c8c90;-webkit-text-stroke:0.3px #8c8c90;">02:00 PM</div>
<div class="r" style="left:126px;top:907px;width:1788px;height:1px;background-image:linear-gradient(90deg,#a6a6aa 60%,transparent 60%);background-size:5px 1px;"></div>
<div class="t" style="left:353.00px;top:885.18px;font-size:13.08px;line-height:13.08px;color:#8c8c90;-webkit-text-stroke:0.3px #8c8c90;">02:15 PM</div>
<div class="t" style="left:603.00px;top:885.18px;font-size:13.08px;line-height:13.08px;color:#8c8c90;-webkit-text-stroke:0.3px #8c8c90;">02:15 PM</div>
<div class="t" style="left:853.00px;top:885.18px;font-size:13.08px;line-height:13.08px;color:#8c8c90;-webkit-text-stroke:0.3px #8c8c90;">02:15 PM</div>
<div class="t" style="left:1103.00px;top:885.18px;font-size:13.08px;line-height:13.08px;color:#8c8c90;-webkit-text-stroke:0.3px #8c8c90;">02:15 PM</div>
<div class="t" style="left:1353.00px;top:885.18px;font-size:13.08px;line-height:13.08px;color:#8c8c90;-webkit-text-stroke:0.3px #8c8c90;">02:15 PM</div>
<div class="t" style="left:1603.00px;top:885.18px;font-size:13.08px;line-height:13.08px;color:#8c8c90;-webkit-text-stroke:0.3px #8c8c90;">02:15 PM</div>
<div class="t" style="left:1854.00px;top:885.18px;font-size:13.08px;line-height:13.08px;color:#8c8c90;-webkit-text-stroke:0.3px #8c8c90;">02:15 PM</div>
<div class="r" style="left:126px;top:940px;width:1788px;height:1px;background-image:linear-gradient(90deg,#a6a6aa 60%,transparent 60%);background-size:5px 1px;"></div>
<div class="t" style="left:353.00px;top:917.73px;font-size:13.08px;line-height:13.08px;color:#8c8c90;-webkit-text-stroke:0.3px #8c8c90;">02:30 PM</div>
<div class="t" style="left:603.00px;top:917.73px;font-size:13.08px;line-height:13.08px;color:#8c8c90;-webkit-text-stroke:0.3px #8c8c90;">02:30 PM</div>
<div class="t" style="left:853.00px;top:917.73px;font-size:13.08px;line-height:13.08px;color:#8c8c90;-webkit-text-stroke:0.3px #8c8c90;">02:30 PM</div>
<div class="t" style="left:1103.00px;top:917.73px;font-size:13.08px;line-height:13.08px;color:#8c8c90;-webkit-text-stroke:0.3px #8c8c90;">02:30 PM</div>
<div class="t" style="left:1353.00px;top:917.73px;font-size:13.08px;line-height:13.08px;color:#8c8c90;-webkit-text-stroke:0.3px #8c8c90;">02:30 PM</div>
<div class="t" style="left:1603.00px;top:917.73px;font-size:13.08px;line-height:13.08px;color:#8c8c90;-webkit-text-stroke:0.3px #8c8c90;">02:30 PM</div>
<div class="t" style="left:1854.00px;top:917.73px;font-size:13.08px;line-height:13.08px;color:#8c8c90;-webkit-text-stroke:0.3px #8c8c90;">02:30 PM</div>
<div class="t" style="left:353.00px;top:950.28px;font-size:13.08px;line-height:13.08px;color:#8c8c90;-webkit-text-stroke:0.3px #8c8c90;">02:45 PM</div>
<div class="t" style="left:603.00px;top:950.28px;font-size:13.08px;line-height:13.08px;color:#8c8c90;-webkit-text-stroke:0.3px #8c8c90;">02:45 PM</div>
<div class="t" style="left:853.00px;top:950.28px;font-size:13.08px;line-height:13.08px;color:#8c8c90;-webkit-text-stroke:0.3px #8c8c90;">02:45 PM</div>
<div class="t" style="left:1103.00px;top:950.28px;font-size:13.08px;line-height:13.08px;color:#8c8c90;-webkit-text-stroke:0.3px #8c8c90;">02:45 PM</div>
<div class="t" style="left:1353.00px;top:950.28px;font-size:13.08px;line-height:13.08px;color:#8c8c90;-webkit-text-stroke:0.3px #8c8c90;">02:45 PM</div>
<div class="t" style="left:1603.00px;top:950.28px;font-size:13.08px;line-height:13.08px;color:#8c8c90;-webkit-text-stroke:0.3px #8c8c90;">02:45 PM</div>
<div class="t" style="left:1854.00px;top:950.28px;font-size:13.08px;line-height:13.08px;color:#8c8c90;-webkit-text-stroke:0.3px #8c8c90;">02:45 PM</div>
<div class="r" style="left:256px;top:192px;width:1px;height:766px;background:#b4b4b8;"></div>
<div class="r" style="left:505px;top:192px;width:1px;height:766px;background:#b4b4b8;"></div>
<div class="r" style="left:755px;top:192px;width:1px;height:766px;background:#b4b4b8;"></div>
<div class="r" style="left:1005px;top:192px;width:1px;height:766px;background:#b4b4b8;"></div>
<div class="r" style="left:1255px;top:192px;width:1px;height:766px;background:#b4b4b8;"></div>
<div class="r" style="left:1505px;top:192px;width:1px;height:766px;background:#b4b4b8;"></div>
<div class="r" style="left:1755px;top:192px;width:1px;height:766px;background:#b4b4b8;"></div>
<div class="r" style="left:126px;top:842px;width:130px;height:1px;background:#a9a9ad;"></div>
<div class="t" style="left:185.00px;top:826.08px;font-size:13.37px;line-height:13.37px;color:#89898f;transform:scaleX(0.9432);">45</div>
<div class="t" style="left:162.50px;top:857.83px;font-size:13.66px;line-height:13.66px;color:#30303f;transform:scaleX(1.0089);">02:00 PM</div>
<div class="t" style="left:186.00px;top:890.58px;font-size:13.37px;line-height:13.37px;color:#89898f;transform:scaleX(0.8085);">15</div>
<div class="t" style="left:184.50px;top:922.68px;font-size:13.37px;line-height:13.37px;color:#89898f;transform:scaleX(1.0106);">30</div>
<div class="r" style="left:257px;top:780px;width:235px;height:127.60000000000002px;background:#28b5b5;border-right:1px solid #1c2b3a;border-bottom:1px solid #1c2b3a;"></div>
<div class="r" style="left:400.8px;top:888px;width:77px;height:19px;background:#27b3b3;border-radius:3px 3px 0 0;box-shadow:2px 0 5px rgba(0,0,0,.35);"></div>
<div class="t" style="left:406.00px;top:892.26px;font-size:9.74px;line-height:9.74px;color:#1f5c60;font-weight:700;-webkit-text-stroke:0;transform:scaleX(1.0955);">COMPLETED</div>
<div class="r" style="left:259px;top:901.6px;width:231px;height:1.5px;background:repeating-linear-gradient(90deg,rgba(15,35,45,.6) 0 1.2px,transparent 1.2px 4px);"></div>
<div class="r" style="left:259px;top:905.3000000000001px;width:231px;height:1.5px;background:repeating-linear-gradient(90deg,rgba(15,35,45,.6) 0 1.2px,transparent 1.2px 4px);"></div>
<div class="r" style="left:757px;top:780px;width:235px;height:95.79999999999995px;background:#bf8f38;border-right:1px solid #242f3a;border-bottom:1px solid #242f3a;"></div>
<div class="r" style="left:894.2px;top:856px;width:22px;height:19px;background:#1f66c2;border-radius:3px 3px 0 0;"></div>
<div class="t" style="left:899.50px;top:861.89px;font-size:10.17px;line-height:10.17px;color:#dfe6f0;font-weight:700;-webkit-text-stroke:0;transform:scaleX(0.8830);">R1</div>
<div class="r" style="left:922px;top:856px;width:56px;height:19px;background:#c38b25;border-radius:3px 3px 0 0;box-shadow:2px 0 5px rgba(0,0,0,.35);"></div>
<div class="t" style="left:928.00px;top:861.89px;font-size:10.17px;line-height:10.17px;color:#e6d9bf;font-weight:700;-webkit-text-stroke:0;">BOOKED</div>
<div class="r" style="left:759px;top:869.8px;width:231px;height:1.5px;background:repeating-linear-gradient(90deg,rgba(15,35,45,.6) 0 1.2px,transparent 1.2px 4px);"></div>
<div class="r" style="left:759px;top:873.5px;width:231px;height:1.5px;background:repeating-linear-gradient(90deg,rgba(15,35,45,.6) 0 1.2px,transparent 1.2px 4px);"></div>
<div class="r" style="left:1257px;top:780px;width:235px;height:95.79999999999995px;background:#249b58;border-right:1px solid #1d3328;border-bottom:1px solid #1d3328;"></div>
<div class="r" style="left:1361px;top:856px;width:76px;height:19px;background:#1f66c2;border-radius:3px 3px 0 0;"></div>
<div class="t" style="left:1367.50px;top:861.89px;font-size:10.17px;line-height:10.17px;color:#dfe6f0;font-weight:700;-webkit-text-stroke:0;">NEW CLIENT</div>
<div class="r" style="left:1444px;top:856px;width:34px;height:19px;background:#1f7e3a;border-radius:3px 3px 0 0;box-shadow:2px 0 5px rgba(0,0,0,.35);"></div>
<div class="t" style="left:1449.50px;top:861.89px;font-size:10.17px;line-height:10.17px;color:#d9e6d9;font-weight:700;-webkit-text-stroke:0;">PAID</div>
<div class="r" style="left:1259px;top:869.8px;width:231px;height:1.5px;background:repeating-linear-gradient(90deg,rgba(15,35,45,.6) 0 1.2px,transparent 1.2px 4px);"></div>
<div class="r" style="left:1259px;top:873.5px;width:231px;height:1.5px;background:repeating-linear-gradient(90deg,rgba(15,35,45,.6) 0 1.2px,transparent 1.2px 4px);"></div>
<div class="r" style="left:1914px;top:192px;width:6px;height:766px;background:#bdbdbd;"></div>
<div class="r" style="left:1914px;top:192px;width:6px;height:356px;background:#6b6b6b;"></div>
<div class="r" style="left:126px;top:958px;width:1788px;height:6px;background:#bababa;"></div>
<div class="r" style="left:126px;top:958px;width:1216px;height:6px;background:#6b6b6b;"></div>
<div class="r" style="left:1874px;top:291.6px;width:46px;height:49px;background:rgba(207,207,209,.96);border-radius:4px 0 0 4px;box-shadow:0 0 4px rgba(0,0,0,.12);"></div>
<div class="r" style="left:1882px;top:301.6px;width:30px;height:29.5px;background:#c5c5c9;border-radius:4px;"></div>
<div class="r" style="left:1874px;top:357.3px;width:46px;height:49px;background:rgba(207,207,209,.96);border-radius:4px 0 0 4px;box-shadow:0 0 4px rgba(0,0,0,.12);"></div>
<div class="r" style="left:1882px;top:367.3px;width:30px;height:29.5px;background:#c5c5c9;border-radius:4px;"></div>
<svg class="r" style="left:1887px;top:305px;" width="20" height="20" viewBox="0 0 20 20"><path d="M1 3 L4 3 L6.5 13 L16 13 L18.5 2.5 L19.5 1" fill="none" stroke="#e0a132" stroke-width="1.5"/><path d="M4.6 5.5 L17.6 5.5" stroke="#e0a132" stroke-width="1.4"/><circle cx="7.5" cy="16.5" r="1.9" fill="none" stroke="#e0a132" stroke-width="1.4"/><circle cx="13.8" cy="16.5" r="1.9" fill="none" stroke="#e0a132" stroke-width="1.4"/></svg>
<svg class="r" style="left:1888px;top:370.5px;" width="19" height="19" viewBox="0 0 19 19"><circle cx="9.3" cy="9.2" r="8.7" fill="#1a9f8c"/><path d="M6 5 Q5 6 5.6 8 Q7 11.5 10.5 13 Q12.5 13.8 13.6 12.7 L12.2 11.2 L10.8 11.8 Q8.5 10.5 7.3 8 L8 6.6 Z" fill="#e8eeee"/></svg>
<div class="r" style="left:94px;top:148px;width:1719px;height:673px;background:#fff;"></div>
<div class="t" style="left:114.60px;top:171.44px;font-size:17.44px;line-height:17.44px;color:#46455a;transform:scaleX(1.0571);">Edit Appointment #8116 Abigail Joness</div>
<svg class="r" style="left:1772px;top:171px;" width="14" height="14" viewBox="0 0 14 14"><path d="M1.5 1.5 L12.5 12.5 M12.5 1.5 L1.5 12.5" stroke="#a8aab6" stroke-width="1.5"/></svg>
<div class="r" style="left:101px;top:209px;width:1704px;height:1px;background:#d5d8e1;"></div>
<div class="r" style="left:241.6px;top:266px;width:560.4px;height:1.3px;background:#dde1e7;"></div>
<div class="r" style="left:122px;top:226px;width:120px;height:41px;border:1px solid #dde1e7;border-bottom:none;border-radius:4px 4px 0 0;background:#fff;"></div>
<svg class="r" style="left:133px;top:239px;" width="16" height="14" viewBox="0 0 16 14"><rect x="1" y="3" width="14" height="10" fill="none" stroke="#3f4e5f" stroke-width="1.4"/><path d="M1 8 L15 8 M5.5 3 L5.5 1 L10.5 1 L10.5 3 M8 7 L8 9" fill="none" stroke="#3f4e5f" stroke-width="1.3"/></svg>
<div class="t" style="left:160.50px;top:240.47px;font-size:14.68px;line-height:14.68px;color:#3f4e5f;transform:scaleX(0.9729);">Treatments</div>
<svg class="r" style="left:253px;top:239px;" width="14" height="14" viewBox="0 0 14 14"><path d="M1 1 L13 1 L13 9 L9 13 L1 13 Z M13 9 L9 9 L9 13" fill="none" stroke="#3f4e5f" stroke-width="1.4"/></svg>
<div class="t" style="left:280.00px;top:240.47px;font-size:14.68px;line-height:14.68px;color:#3f4e5f;transform:scaleX(0.9396);">Notes</div>
<svg class="r" style="left:336px;top:239px;" width="15" height="15" viewBox="0 0 15 15"><rect x="1.5" y="1" width="12" height="13" fill="none" stroke="#3f4e5f" stroke-width="1.4"/><path d="M4 3.5h1.5M7 3.5h1.5M10 3.5h1.5M4 6h1.5M7 6h1.5M10 6h1.5M4 8.5h1.5M7 8.5h1.5M10 8.5h1.5" stroke="#3f4e5f" stroke-width="1.5"/><rect x="6" y="10.5" width="3" height="3.5" fill="#3f4e5f"/><rect x="1" y="13" width="13" height="1.6" fill="#3f4e5f"/></svg>
<div class="t" style="left:363.60px;top:240.47px;font-size:14.68px;line-height:14.68px;color:#3f4e5f;transform:scaleX(0.9206);">Resources</div>
<div class="t" style="left:123.80px;top:303.57px;font-size:12.79px;line-height:12.79px;color:#4b4a5e;transform:scaleX(1.1156);">Treatment Type:</div>
<div class="r" style="left:122px;top:325px;width:680px;height:38px;border:1px solid #e2e4eb;border-radius:4px;"></div>
<div class="t" style="left:137.80px;top:337.67px;font-size:14.10px;line-height:14.10px;color:#1f1f26;transform:scaleX(0.9654);">Services</div>
<div class="t" style="left:123.80px;top:380.57px;font-size:12.79px;line-height:12.79px;color:#4b4a5e;transform:scaleX(1.1136);">Select Treatment:</div>
<div class="r" style="left:122px;top:402px;width:680px;height:315.5px;box-shadow:0 6px 60px rgba(30,30,70,.085);border-radius:4px;"></div>
<div class="r" style="left:122px;top:440px;width:680px;height:278px;background:#fff;border:1px solid #dcdfe6;border-top:none;border-radius:0 0 4px 4px;"></div>
<div class="r" style="left:122px;top:402px;width:680px;height:38px;border:2px solid #84cbf3;border-radius:4px 4px 0 0;background:linear-gradient(#ffffff,#ececf0);"></div>
<div class="t" style="left:137.80px;top:414.14px;font-size:14.24px;line-height:14.24px;color:#1f1f26;">Click to Select a Treatment</div>
<div class="r" style="left:138px;top:456px;width:648px;height:31px;border:1px solid #e2e4eb;border-radius:4px;"></div>
<div class="r" style="left:123.4px;top:501.6px;width:671.6px;height:29.1px;background:#f4f5f8;"></div>
<div class="t" style="left:139.75px;top:509.81px;font-size:13.81px;line-height:13.81px;color:#6e7182;transform:scaleX(1.0354);">Click to Select a Treatment</div>
<div class="t" style="left:139.75px;top:539.23px;font-size:13.81px;line-height:13.81px;color:#393c4d;transform:scaleX(1.0260);">Dermatologist Treatments | Botox | Botox 3 Areas (40 mins / £Open Price)</div>
<div class="t" style="left:139.75px;top:568.65px;font-size:13.81px;line-height:13.81px;color:#393c4d;transform:scaleX(1.0227);">Membership | Laser Hair Removal | Aroma therapy massage (50 mins / £55.0000)</div>
<div class="t" style="left:139.75px;top:598.07px;font-size:13.81px;line-height:13.81px;color:#393c4d;transform:scaleX(1.0227);">Membership | Laser Hair Removal | Aroma therapy massage (50 mins / £55.0000)</div>
<div class="t" style="left:139.75px;top:627.49px;font-size:13.81px;line-height:13.81px;color:#393c4d;transform:scaleX(1.0227);">Membership | Laser Hair Removal | Aroma therapy massage (50 mins / £55.0000)</div>
<div class="t" style="left:139.75px;top:656.91px;font-size:13.81px;line-height:13.81px;color:#393c4d;transform:scaleX(1.0058);">Laser Hair Removal | Extra small area | LHR Extra Small Area (10 mins / £49.0000)</div>
<div class="t" style="left:139.75px;top:686.33px;font-size:13.81px;line-height:13.81px;color:#393c4d;transform:scaleX(1.0121);">Counselling | Counselling | Career Counselling (30 mins / £Open Price)</div>
<div class="r" style="left:795.3px;top:501.6px;width:5.7px;height:200.4px;background:#f1f1f3;"></div>
<div class="r" style="left:795.5px;top:501.6px;width:5.5px;height:16.5px;background:#8a8a8c;"></div>
<div class="r" style="left:123px;top:702px;width:678px;height:15px;background:#e9e9ec;border-radius:0 0 3px 3px;"></div>
<div class="t" style="left:832.40px;top:230.37px;font-size:12.79px;line-height:12.79px;color:#4b4a5e;transform:scaleX(1.1302);">Appointment Status</div>
<div class="t" style="left:832.40px;top:301.17px;font-size:12.79px;line-height:12.79px;color:#4b4a5e;transform:scaleX(1.0988);">Search Client</div>
<div class="t" style="left:832.40px;top:372.17px;font-size:12.79px;line-height:12.79px;color:#4b4a5e;transform:scaleX(1.1023);">How did you hear about us?</div>
<div class="t" style="left:832.40px;top:443.17px;font-size:12.79px;line-height:12.79px;color:#4b4a5e;transform:scaleX(1.1548);">Appointment Title</div>
<div class="r" style="left:832px;top:252px;width:459px;height:38px;border:1px solid #e2e4eb;border-radius:4px;"></div>
<div class="r" style="left:832px;top:323px;width:459px;height:38px;border:1px solid #e2e4eb;border-radius:4px;"></div>
<div class="r" style="left:832px;top:394px;width:459px;height:38px;border:1px solid #e2e4eb;border-radius:4px;"></div>
<div class="r" style="left:832px;top:465px;width:459px;height:38px;border:1px solid #e2e4eb;border-radius:4px;"></div>
<div class="t" style="left:847.20px;top:264.69px;font-size:13.95px;line-height:13.95px;color:#1f1f26;">Booked</div>
<div class="t" style="left:846.70px;top:335.67px;font-size:14.10px;line-height:14.10px;color:#1f1f26;transform:scaleX(0.9869);">Abigail Joness ( +447490009777, abigailjones@mailinator.com,...</div>
<div class="t" style="left:847.00px;top:406.69px;font-size:13.95px;line-height:13.95px;color:#1f1f26;transform:scaleX(1.0075);">Choose Value</div>
<div class="t" style="left:1312.50px;top:230.37px;font-size:12.79px;line-height:12.79px;color:#4b4a5e;transform:scaleX(1.0904);">Search Staff</div>
<div class="t" style="left:1312.50px;top:301.17px;font-size:12.79px;line-height:12.79px;color:#4b4a5e;transform:scaleX(1.1116);">Date</div>
<div class="t" style="left:1548.30px;top:301.17px;font-size:12.79px;line-height:12.79px;color:#4b4a5e;transform:scaleX(1.1314);">Duration</div>
<div class="t" style="left:1312.50px;top:372.17px;font-size:12.79px;line-height:12.79px;color:#4b4a5e;transform:scaleX(1.1242);">Start Time</div>
<div class="t" style="left:1548.30px;top:372.17px;font-size:12.79px;line-height:12.79px;color:#4b4a5e;transform:scaleX(1.1047);">End Time</div>
<div class="t" style="left:1312.50px;top:443.17px;font-size:12.79px;line-height:12.79px;color:#4b4a5e;transform:scaleX(1.0915);">Requested</div>
<div class="r" style="left:1311px;top:252px;width:460px;height:38px;border:1px solid #e2e4eb;border-radius:4px;"></div>
<div class="t" style="left:1326.30px;top:264.69px;font-size:13.95px;line-height:13.95px;color:#1f1f26;transform:scaleX(0.9888);">Mark McElroy</div>
<div class="r" style="left:1311px;top:323px;width:223px;height:38px;border:1px solid #e2e4eb;border-radius:4px;"></div>
<div class="t" style="left:1326.30px;top:336.79px;font-size:13.95px;line-height:13.95px;color:#52525c;transform:scaleX(1.0911);">08/07/2022</div>
<div class="r" style="left:1547px;top:323px;width:224px;height:38px;border:1px solid #e2e4eb;border-radius:4px;"></div>
<div class="t" style="left:1562.50px;top:336.79px;font-size:13.95px;line-height:13.95px;color:#1f1f26;transform:scaleX(1.0718);">0</div>
<div class="r" style="left:1311px;top:394px;width:223px;height:38px;border:1px solid #e2e4eb;border-radius:4px;"></div>
<div class="t" style="left:1326.70px;top:407.29px;font-size:13.95px;line-height:13.95px;color:#1f1f26;transform:scaleX(0.8757);">12:15 PM</div>
<div class="r" style="left:1547px;top:394px;width:224px;height:38px;border:1px solid #e2e4eb;border-radius:4px;"></div>
<div class="t" style="left:1562.50px;top:407.29px;font-size:13.95px;line-height:13.95px;color:#1f1f26;transform:scaleX(0.9293);">02:15 PM</div>
<div class="r" style="left:1311px;top:465px;width:460px;height:38px;border:1px solid #e2e4eb;border-radius:4px;"></div>
<div class="t" style="left:1326.30px;top:477.99px;font-size:13.95px;line-height:13.95px;color:#1f1f26;transform:scaleX(1.0267);">Choose requested option</div>
<div class="r" style="left:832px;top:524px;width:219px;height:38px;background:#34495e;border-radius:4px;"></div>
<div class="t" style="left:903.90px;top:536.23px;font-size:13.66px;line-height:13.66px;color:#ffffff;font-weight:700;-webkit-text-stroke:0;transform:scaleX(0.9621);">Client Notes</div>
<div class="r" style="left:832px;top:575px;width:219px;height:38px;background:#34495e;border-radius:4px;"></div>
<div class="t" style="left:905.80px;top:587.43px;font-size:13.66px;line-height:13.66px;color:#ffffff;font-weight:700;-webkit-text-stroke:0;">Treatments</div>
<div class="t" style="left:905.40px;top:629.32px;font-size:14.39px;line-height:14.39px;color:#4a485c;transform:scaleX(0.9727);">Balance: £0</div>
<div class="r" style="left:1071px;top:524px;width:700px;height:193px;border:1px solid #e2e4eb;border-radius:4px;"></div>
<div class="t" style="left:1086.40px;top:536.56px;font-size:13.52px;line-height:13.52px;color:#7b7f90;transform:scaleX(1.0439);">Appointment Notes...</div>
<svg class="r" style="left:1759px;top:705px;" width="10" height="10" viewBox="0 0 10 10"><path d="M9 2 L2 9 M9 6 L6 9" stroke="#555" stroke-width="1"/></svg>
<div class="r" style="left:101px;top:747px;width:1704px;height:1px;background:#d3d6df;"></div>
<div class="r" style="left:112px;top:764px;width:163px;height:38.7px;background:#f27b7b;border-radius:4px;"></div>
<div class="t" style="left:137.90px;top:777.61px;font-size:13.81px;line-height:13.81px;color:#ffffff;font-weight:700;-webkit-text-stroke:0;transform:scaleX(0.9388);">Remove From List</div>
<div class="r" style="left:288px;top:764px;width:162px;height:38.7px;background:#f27b7b;border-radius:4px;"></div>
<div class="t" style="left:340.30px;top:778.39px;font-size:13.95px;line-height:13.95px;color:#ffffff;font-weight:700;-webkit-text-stroke:0;transform:scaleX(0.9267);">Clear List</div>
<div class="r" style="left:1628px;top:764px;width:163px;height:38.7px;background:#1fc9b5;border-radius:4px;"></div>
<div class="t" style="left:1687.00px;top:777.34px;font-size:14.24px;line-height:14.24px;color:#ffffff;font-weight:700;-webkit-text-stroke:0;transform:scaleX(0.9692);">Update</div>
<div class="r" style="left:101px;top:813px;width:1704px;height:1px;background:#fbe6e6;"></div>
</body></html>
